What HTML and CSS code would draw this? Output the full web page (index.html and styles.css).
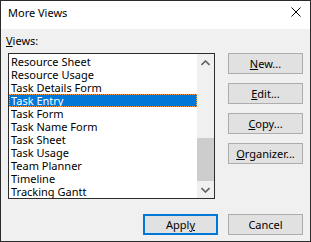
FILE: index.html
```html
<!DOCTYPE html>
<html lang="en">
<head>
  <meta charset="UTF-8" />
  <title>More Views</title>
  <link rel="stylesheet" href="styles.css">
</head>
<body>

<div class="window">
  <div class="titlebar">
    <span class="title">More Views</span>
    <svg class="close" width="10" height="10" viewBox="0 0 10 10">
      <path d="M0.5 0.5 L9.5 9.5 M9.5 0.5 L0.5 9.5" stroke="#000" stroke-width="1" fill="none" />
    </svg>
  </div>

  <div class="content">
    <div class="label"><u>V</u>iews:</div>

    <div class="main">
      <div class="listbox">
        <ul class="items">
          <li>Resource Sheet</li>
          <li>Resource Usage</li>
          <li>Task Details Form</li>
          <li class="selected">Task Entry</li>
          <li>Task Form</li>
          <li>Task Name Form</li>
          <li>Task Sheet</li>
          <li>Task Usage</li>
          <li>Team Planner</li>
          <li>Timeline</li>
          <li>Tracking Gantt</li>
        </ul>
        <div class="scrollbar">
          <div class="arrow">
            <svg width="9" height="6" viewBox="0 0 9 6"><path d="M0.5 5 L4.5 1 L8.5 5" stroke="#606060" stroke-width="1.6" fill="none" /></svg>
          </div>
          <div class="track"><div class="thumb"></div></div>
          <div class="arrow">
            <svg width="9" height="6" viewBox="0 0 9 6"><path d="M0.5 1 L4.5 5 L8.5 1" stroke="#606060" stroke-width="1.6" fill="none" /></svg>
          </div>
        </div>
      </div>

      <div class="side-buttons">
        <button><u>N</u>ew...</button>
        <button><u>E</u>dit...</button>
        <button><u>C</u>opy...</button>
        <button><u>O</u>rganizer...</button>
      </div>
    </div>

    <div class="footer">
      <button class="default">Appl<u>y</u></button>
      <button>Cancel</button>
    </div>
  </div>
</div>

</body>
</html>
```

FILE: styles.css
```css
body {
  margin: 0;
  font-family: 'Noto Sans', 'Segoe UI', sans-serif;
  font-size: 11px;
  color: #000;
}

.window {
  width: 311px;
  height: 242px;
  box-sizing: border-box;
  border: 1px solid #2b2b2b;
  background: #f0f0f0;
  display: flex;
  flex-direction: column;
}

.titlebar {
  height: 28px;
  background: #fff;
  display: flex;
  align-items: flex-start;
  padding: 4px 9px 0 7px;
  box-sizing: border-box;
}

.title {
  line-height: 16px;
}

.close {
  margin-left: auto;
  margin-top: 2px;
}

.content {
  padding: 4px 7px 0 7px;
}

.label {
  line-height: 16px;
  margin-left: -2px;
}

.main {
  display: flex;
  gap: 13px;
  margin-top: 4px;
}

.listbox {
  width: 207px;
  height: 146px;
  box-sizing: border-box;
  border: 1px solid #2d2d2d;
  background: #fff;
  display: flex;
}

.items {
  list-style: none;
  margin: 0;
  padding: 1px 0 0 0;
  flex: 1;
  overflow: hidden;
}

.items li {
  height: 13px;
  line-height: 13px;
  padding-left: 2px;
  white-space: nowrap;
}

.items li.selected {
  background: #0078d7;
  color: #fff;
  outline: 1px dotted #ff9a3c;
  outline-offset: -1px;
}

.scrollbar {
  width: 17px;
  background: #f0f0f0;
  display: flex;
  flex-direction: column;
}

.arrow {
  height: 17px;
  display: flex;
  align-items: center;
  justify-content: center;
}

.track {
  flex: 1;
  display: flex;
  flex-direction: column;
  justify-content: flex-end;
}

.thumb {
  height: 43px;
  background: #cdcdcd;
}

.side-buttons {
  display: flex;
  flex-direction: column;
  gap: 9px;
}

button {
  width: 75px;
  height: 21px;
  padding: 0;
  box-sizing: border-box;
  border: 1px solid #adadad;
  background: #e1e1e1;
  font-family: inherit;
  font-size: 11px;
  color: #000;
}

button.default {
  border: 2px solid #0078d7;
}

.footer {
  display: flex;
  justify-content: flex-end;
  gap: 10px;
  margin-top: 15px;
}
```
